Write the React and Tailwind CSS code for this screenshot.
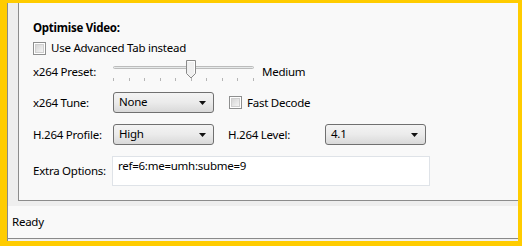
import React from 'react';

const font = { fontFamily: '"Noto Sans", "Open Sans", sans-serif' };

function Checkbox({ label }) {
	return (
		<div className="flex items-center h-4">
			<div className="w-[13px] h-[13px] border border-[#8e8f8f] bg-white p-px">
				<div className="w-full h-full bg-gradient-to-br from-[#d6d6d6] to-[#f4f4f4] border border-[#cfcfcf]" />
			</div>
			<span className="ml-[5px] whitespace-nowrap">{label}</span>
		</div>
	);
}

function Dropdown({ value, width }) {
	return (
		<div className={`${width} h-[21px] flex items-center justify-between pl-[5px] pr-[7px] rounded-[3px] border border-[#707070] bg-gradient-to-b from-[#f4f4f4] via-[#ebebeb] to-[#d9d9d9]`}>
			<span className="-mt-[2px]">{value}</span>
			<svg width="7" height="4" viewBox="0 0 7 4"><path d="M0 0h7L3.5 4z" fill="#111" /></svg>
		</div>
	);
}

function Slider() {
	const ticks = [0, 1, 2, 3, 4, 5, 6, 7, 8, 9];
	return (
		<svg width="146" height="24" viewBox="0 0 146 24">
			<rect x="3.5" y="6.5" width="140" height="2" rx="1" fill="#e7eaea" stroke="#bcbcbc" />
			{ticks.map((i) => (
				<rect key={i} x={3 + Math.round(i * 15.55)} y="18" width="1" height="3" fill="#b5b5b5" />
			))}
			<path d="M76.5 0.5h9v13l-4.5 4.5l-4.5-4.5z" fill="#f0f0f0" stroke="#8a8a8a" />
			<path d="M77.5 1.5h7v11.5" fill="none" stroke="#ffffff" />
		</svg>
	);
}

export default function App() {
	return (
		<div className="w-[522px] h-[246px] bg-[#ffcc00] pt-[3px] pl-[7px] pr-[4px] pb-[5px] text-[11.5px] tracking-[-0.25px] text-black overflow-hidden" style={font}>
			<div className="h-full flex flex-col border-l border-[#8a8a8a] bg-[#f0f0f0]">
				<div className="h-[198px] flex">
					<div className="w-[10px] bg-[#eeeeee]" />
					<div className="flex-1 border-l border-b border-[#8c8c8c] bg-[#f9f9f9] pl-[14px] pt-[17px] leading-4">
						<div className="h-4 font-bold">Optimise Video:</div>
						<div className="mt-1">
							<Checkbox label="Use Advanced Tab instead" />
						</div>
						<div className="mt-1 h-6 flex items-center">
							<span className="w-[77px] whitespace-nowrap">x264 Preset:</span>
							<Slider />
							<span className="ml-[6px]">Medium</span>
						</div>
						<div className="mt-2 flex items-center">
							<span className="w-[80px] whitespace-nowrap">x264 Tune:</span>
							<Dropdown value="None" width="w-[101px]" />
							<div className="ml-[15px]">
								<Checkbox label="Fast Decode" />
							</div>
						</div>
						<div className="mt-[11px] flex items-center">
							<span className="w-[80px] whitespace-nowrap">H.264 Profile:</span>
							<Dropdown value="High" width="w-[101px]" />
							<span className="ml-[14px] w-[97px] whitespace-nowrap">H.264 Level:</span>
							<Dropdown value="4.1" width="w-[101px]" />
						</div>
						<div className="mt-[11px] flex items-center">
							<span className="w-[79px] whitespace-nowrap">Extra Options:</span>
							<div className="w-[318px] h-[30px] border border-[#dfe3e8] bg-white pl-[5px] pt-[1px]">ref=6:me=umh:subme=9</div>
						</div>
					</div>
				</div>
				<div className="h-[5px] bg-[#eeeeee]" />
				<div className="h-[33px] bg-[#f9f9f9] border-b border-[#8a8a8a] flex items-center pl-[4px]">Ready</div>
			</div>
		</div>
	);
}
